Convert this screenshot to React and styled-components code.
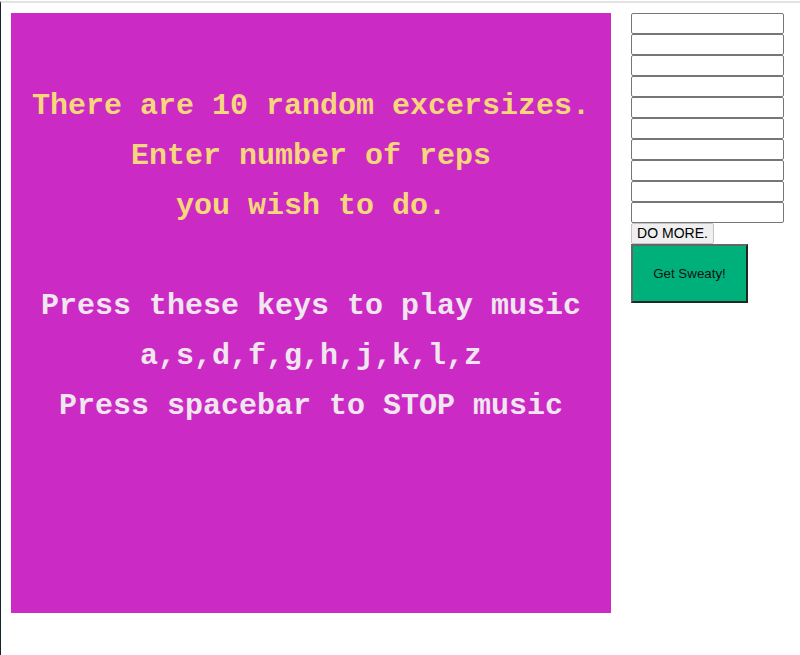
import React from "react";
import styled, { createGlobalStyle } from "styled-components";

const Global = createGlobalStyle`
  html, body { margin: 0; padding: 0; background: #ffffff; }
  body { font-family: "Liberation Sans", Arial, sans-serif; }
`;

const Frame = styled.div`
  margin-top: 1px;
  min-height: 654px;
  box-sizing: border-box;
  border-top: 2px solid #e3e3e3;
  border-left: 1px solid #15232b;
  padding: 10px 0 0 10px;
`;

const Row = styled.div`
  display: flex;
  align-items: flex-start;
  gap: 20px;
`;

const Board = styled.div`
  width: 600px;
  height: 600px;
  background: #cc2ac4;
  box-sizing: border-box;
  padding-top: 68px;
  text-align: center;
  font-family: "Liberation Mono", "Courier New", monospace;
  font-weight: bold;
  font-size: 30px;
  line-height: 50px;
`;

const Line = styled.div`
  color: ${(p) => (p.$tone === "yellow" ? "#f7d77c" : "#f0e6f0")};
  height: 50px;
  white-space: pre;
`;

const Side = styled.div`
  display: flex;
  flex-direction: column;
  align-items: flex-start;
`;

const Field = styled.input`
  display: block;
  box-sizing: border-box;
  width: 153px;
  height: 21px;
  margin: 0;
  padding: 1px 2px;
  border: 1px solid #767676;
  border-radius: 2px;
  background: #fff;
  font-family: "Liberation Sans", Arial, sans-serif;
  font-size: 13.33px;
`;

const MoreButton = styled.button`
  box-sizing: border-box;
  width: 83px;
  height: 21px;
  margin: 0;
  padding: 1px 0;
  background: #efefef;
  border: 1px solid #c4c4c4;
  border-radius: 2px;
  color: #000;
  font-family: "Liberation Sans", Arial, sans-serif;
  font-size: 14px;
  line-height: 17px;
`;

const SweatyButton = styled.button`
  box-sizing: border-box;
  width: 117px;
  height: 59px;
  margin: 0;
  padding: 0;
  background: #00b07a;
  border-style: solid;
  border-width: 2px;
  border-color: #666666 #1c2a22 #1c2a22 #666666;
  color: #111;
  font-family: "Liberation Sans", Arial, sans-serif;
  font-size: 13.33px;
`;

const top = [
  "There are 10 random excersizes.",
  "Enter number of reps",
  "you wish to do.",
];
const bottom = [
  "Press these keys to play music",
  "a,s,d,f,g,h,j,k,l,z",
  "Press spacebar to STOP music",
];

export default function App() {
  return (
    <>
      <Global />
      <Frame>
        <Row>
          <Board>
            {top.map((t) => (
              <Line key={t} $tone="yellow">{t}</Line>
            ))}
            <Line $tone="white"> </Line>
            {bottom.map((t) => (
              <Line key={t} $tone="white">{t}</Line>
            ))}
          </Board>
          <Side>
            {Array.from({ length: 10 }).map((_, i) => (
              <Field key={i} type="text" />
            ))}
            <MoreButton>DO MORE.</MoreButton>
            <SweatyButton>Get Sweaty!</SweatyButton>
          </Side>
        </Row>
      </Frame>
    </>
  );
}
